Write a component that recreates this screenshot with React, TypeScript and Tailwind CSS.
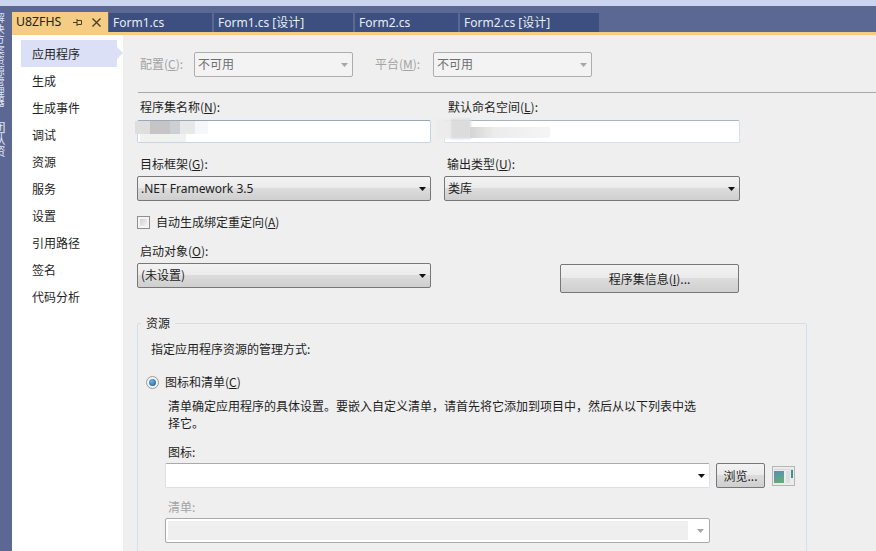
import React from "react";

const sidebarItems = ["应用程序", "生成", "生成事件", "调试", "资源", "服务", "设置", "引用路径", "签名", "代码分析"];

const tabs = [
  { title: "Form1.cs", width: "w-[103px]" },
  { title: "Form1.cs [设计]", width: "w-[139px]" },
  { title: "Form2.cs", width: "w-[103px]" },
  { title: "Form2.cs [设计]", width: "w-[139px]" },
];

const Caret = ({ disabled }: { disabled?: boolean }) => (
  <svg width="7" height="4" viewBox="0 0 7 4" className="shrink-0">
    <path d="M0 0H7L3.5 4Z" fill={disabled ? "#a6a6a6" : "#111111"} />
  </svg>
);

const Key = ({ children }: { children: React.ReactNode }) => <span className="underline underline-offset-1">{children}</span>;

const GradientSelect = ({ text, className, latin }: { text: string; className: string; latin?: boolean }) => (
  <div className={`flex h-[25px] items-center justify-between rounded-[2px] border border-[#777777] bg-[linear-gradient(#f3f3f3,#ebebeb_46%,#dcdcdc_50%,#cfcfcf)] pl-[3px] pr-[4px] text-[#222222] ${className}`}>
    <span className={latin ? "" : "pb-[2px]"}>{text}</span>
    <Caret />
  </div>
);

const DisabledSelect = ({ className }: { className: string }) => (
  <div className={`flex h-[25px] items-center justify-between rounded-[2px] border border-[#adadad] bg-[#f3f3f3] pl-[3px] pr-[4px] text-[#6f6f6f] ${className}`}>
    <span className="pb-[2px]">不可用</span>
    <Caret disabled />
  </div>
);

export default function App() {
  return (
    <div className="flex h-[551px] w-[876px] flex-col overflow-hidden bg-[#5b6894] text-[12px] leading-[16px] text-[#1e1e1e] [font-family:'Noto_Sans_CJK_SC','Liberation_Sans',sans-serif]">
      <div className="h-[6px] shrink-0 bg-[#ccd5f0]" />
      <div className="flex min-h-0 flex-1">
        {/* collapsed tool window rail */}
        <div className="w-[12px] shrink-0 overflow-hidden pt-[7px]">
          <div className="-ml-[8px] text-[10.5px] leading-[14px] text-[#dfe2f6] [writing-mode:vertical-rl]">解决方案资源管理器</div>
          <div className="-ml-[8px] mt-[13px] text-[12px] leading-[14px] text-[#dfe2f6] [writing-mode:vertical-rl]">团队资</div>
        </div>

        <div className="flex min-w-0 flex-1 flex-col">
          <div className="flex h-[26px] shrink-0 items-end pt-[6px]">
            <div className="flex h-[20px] w-[96px] items-center bg-[#f5cc84] pl-[4px] text-[#222222] [font-family:'Noto_Sans','Liberation_Sans',sans-serif]">
              <span className="w-[45px] text-[12.3px]">U8ZFHS</span>
              <svg width="9" height="7" viewBox="0 0 9 7" className="ml-[12px]">
                <path d="M0 3.500H4M4 0V7M4 1.500H8.500V5.500H4" fill="none" stroke="#4a3d22" />
              </svg>
              <svg width="9" height="9" viewBox="0 0 9 9" className="ml-[10px]">
                <path d="M0.500 0.500L8.500 8.500M8.500 0.500L0.500 8.500" stroke="#4a3d22" strokeWidth="1.300" />
              </svg>
            </div>
            <div className="ml-px flex gap-[2px]">
              {tabs.map((tab, i) => (
                <div key={i} className={`flex h-[19px] items-center bg-[#3c4f80] pl-[4px] text-[12px] text-[#e8ecf6] [font-family:'Noto_Sans','Noto_Sans_CJK_SC',sans-serif] ${tab.width}`}>
                  {tab.title}
                </div>
              ))}
            </div>
          </div>
          <div className="h-[3px] shrink-0 bg-[#f5cc84]" />

          <div className="flex min-h-0 flex-1">
            <aside className="w-[111px] shrink-0 bg-white pl-[9px] pt-[5px]">
              {sidebarItems.map((item, i) => (
                <div key={item} className={`relative flex h-[27px] w-[96px] items-center pl-[11px] ${i === 0 ? "bg-[#dbe0f7]" : ""}`}>
                  {item}
                  {i === 0 && <div className="absolute -right-[6px] top-[7px] h-0 w-0 border-y-[6px] border-l-[6px] border-y-transparent border-l-[#dbe0f7]" />}
                </div>
              ))}
            </aside>

            <main className="min-w-0 flex-1 bg-[#efefef] pl-[14px] pt-[17px]">
              <div className="flex items-center">
                <span className="w-[57px] pb-[2px] pl-[3px] text-[#a3a3a3]">配置(<Key>C</Key>):</span>
                <DisabledSelect className="w-[159px]" />
                <span className="ml-[22px] w-[58px] pb-[2px] text-[#a3a3a3]">平台(<Key>M</Key>):</span>
                <DisabledSelect className="w-[159px]" />
              </div>

              <div className="ml-px mt-[15px] h-px bg-[#a8a8a8]" />

              <div className="mt-[6px] flex">
                <div className="w-[307px]">
                  <label className="block h-[16px] pl-[3px]">程序集名称(<Key>N</Key>):</label>
                  <div className="relative mt-[5px] h-[23px] w-[294px] rounded-[2px] border border-[#c5d4e4] border-t-[#9aa9b8] bg-white">
                    {/* blurred out name */}
                    <div className="absolute -left-[3px] top-0 h-[13px] w-[73px] bg-[linear-gradient(90deg,#dedede_20%,#c6c4c4_20%,#c6c4c4_48%,#ccd0d4_48%,#ccd0d4_62%,#e6e8ea_62%,#e6e8ea_82%,#f5f7f9_82%)] blur-[0.5px]" />
                    <div className="absolute left-[2px] top-[13px] h-[8px] w-[46px] bg-[#f0f2f0] blur-[0.5px]" />
                  </div>
                </div>
                <div>
                  <label className="block h-[16px] pl-[4px]">默认命名空间(<Key>L</Key>):</label>
                  <div className="relative mt-[5px] h-[23px] w-[296px] rounded-[2px] border border-[#d6dfe8] border-t-[#a9b4bf] bg-white">
                    {/* blurred out namespace */}
                    <div className="absolute -left-[9px] -top-[2px] h-[20px] w-[35px] bg-[linear-gradient(90deg,#ececec_43%,#dcdcdc_43%)] blur-[1px]" />
                    <div className="absolute left-[25px] top-[6px] h-[11px] w-[80px] bg-[linear-gradient(90deg,#d4d4d4,#ececec_30%,#f5f5f5)] blur-[0.5px]" />
                  </div>
                </div>
              </div>

              <div className="mt-[13px] flex">
                <div className="w-[307px]">
                  <label className="block h-[16px] pl-[3px]">目标框架(<Key>G</Key>):</label>
                  <GradientSelect text=".NET Framework 3.5" latin className="mt-[4px] w-[294px] [font-family:'Noto_Sans','Noto_Sans_CJK_SC',sans-serif]" />
                </div>
                <div>
                  <label className="block h-[16px] pl-[3px]">输出类型(<Key>U</Key>):</label>
                  <GradientSelect text="类库" className="mt-[4px] w-[296px]" />
                </div>
              </div>

              <div className="mt-[13px] flex h-[16px] items-center">
                <div className="h-[13px] w-[13px] border border-[#8f8f8f] bg-[#f4f4f4] p-[2px]">
                  <div className="h-full w-full bg-gradient-to-br from-[#cfcfcf] to-[#f4f4f4]" />
                </div>
                <span className="ml-[6px]">自动生成绑定重定向(<Key>A</Key>)</span>
              </div>

              <div className="mt-[13px] flex">
                <div className="w-[423px]">
                  <label className="block h-[16px] pl-[3px]">启动对象(<Key>O</Key>):</label>
                  <GradientSelect text="(未设置)" className="mt-[4px] w-[294px]" />
                </div>
                <button className="mt-[21px] h-[29px] w-[179px] rounded-[2px] border border-[#777777] bg-[linear-gradient(#f3f3f3,#ebebeb_46%,#dcdcdc_50%,#cfcfcf)]">
                  程序集信息(<Key>I</Key>)...
                </button>
              </div>

              <section className="relative mt-[30px] h-[260px] w-[670px] rounded-[2px] border border-[#d5dfe8] pl-[13px] pt-[17px]">
                <div className="absolute -top-[9px] left-[3px] bg-[#efefef] px-[5px]">资源</div>
                <p>指定应用程序资源的管理方式:</p>

                <div className="-ml-[5px] mt-[17px] flex h-[16px] items-center">
                  <div className="flex h-[13px] w-[13px] items-center justify-center rounded-full border border-[#9a9a9a] bg-[#f4f4f4]">
                    <div className="h-[7px] w-[7px] rounded-full bg-[radial-gradient(circle_at_40%_35%,#6bb5e6,#14558f)]" />
                  </div>
                  <span className="ml-[6px]">图标和清单(<Key>C</Key>)</span>
                </div>

                <p className="ml-[17px] mt-[7px] w-[535px] leading-[17px]">清单确定应用程序的具体设置。要嵌入自定义清单，请首先将它添加到项目中，然后从以下列表中选择它。</p>

                <label className="ml-[17px] mt-[13px] block h-[16px]">图标:</label>
                <div className="ml-[14px] mt-[3px] flex items-center">
                  <div className="flex h-[25px] w-[545px] items-center justify-end rounded-[2px] border border-[#a9a9a9] border-b-[#dcdfe8] border-l-[#dcdfe8] border-r-[#dcdfe8] bg-white pr-[4px]">
                    <Caret />
                  </div>
                  <button className="ml-[6px] h-[25px] w-[49px] rounded-[2px] border border-[#777777] bg-[linear-gradient(#f3f3f3,#ebebeb_46%,#dcdcdc_50%,#cfcfcf)]">浏览...</button>
                  <svg width="23" height="20" viewBox="0 0 23 20" className="ml-[7px]">
                    <defs>
                      <linearGradient id="iconPic" x1="0" y1="0" x2="0.300" y2="1">
                        <stop offset="0" stopColor="#5a8db5" />
                        <stop offset="1" stopColor="#62ab7c" />
                      </linearGradient>
                    </defs>
                    <rect x="0.500" y="0.500" width="22" height="19" fill="#ececec" stroke="#b5b5b5" />
                    <rect x="2" y="3" width="19" height="1" fill="#d8d8d8" />
                    <rect x="2" y="5" width="10" height="12" fill="url(#iconPic)" />
                    <rect x="14" y="5" width="4" height="12" fill="#dedede" />
                    <rect x="19" y="4" width="2" height="8" fill="#3c8f8c" />
                  </svg>
                </div>

                <label className="ml-[17px] mt-[11px] block h-[16px] text-[#a3a3a3]">清单:</label>
                <div className="ml-[14px] mt-[3px] flex h-[25px] w-[545px] items-center rounded-[2px] border border-[#a9a9a9] bg-white pl-[2px] pr-[5px]">
                  <div className="h-[19px] flex-1 bg-[#efefef]" />
                  <div className="ml-[9px]"><Caret disabled /></div>
                </div>
              </section>
            </main>
          </div>
        </div>
      </div>
    </div>
  );
}
